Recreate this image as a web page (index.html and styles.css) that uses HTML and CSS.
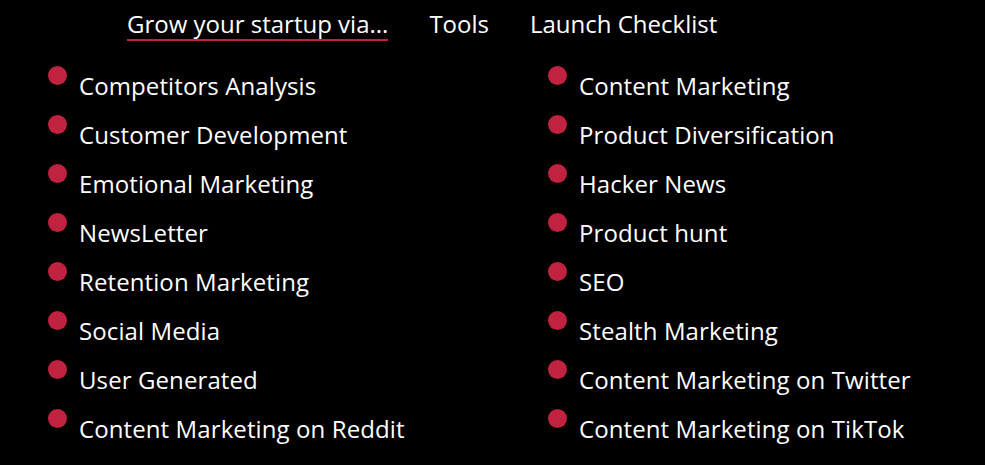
FILE: index.html
```html
<!DOCTYPE html>
<html>
<head>
<meta charset="utf-8">
<link rel="stylesheet" href="styles.css">
</head>
<body>
<nav class="nav">
  <a class="nav-link active">Grow your startup via...</a>
  <a class="nav-link">Tools</a>
  <a class="nav-link">Launch Checklist</a>
</nav>
<ul class="list">
  <li class="item"><span class="dot"></span><span class="label">Competitors Analysis</span></li>
  <li class="item"><span class="dot"></span><span class="label">Content Marketing</span></li>
  <li class="item"><span class="dot"></span><span class="label">Customer Development</span></li>
  <li class="item"><span class="dot"></span><span class="label">Product Diversification</span></li>
  <li class="item"><span class="dot"></span><span class="label">Emotional Marketing</span></li>
  <li class="item"><span class="dot"></span><span class="label">Hacker News</span></li>
  <li class="item"><span class="dot"></span><span class="label">NewsLetter</span></li>
  <li class="item"><span class="dot"></span><span class="label">Product hunt</span></li>
  <li class="item"><span class="dot"></span><span class="label">Retention Marketing</span></li>
  <li class="item"><span class="dot"></span><span class="label">SEO</span></li>
  <li class="item"><span class="dot"></span><span class="label">Social Media</span></li>
  <li class="item"><span class="dot"></span><span class="label">Stealth Marketing</span></li>
  <li class="item"><span class="dot"></span><span class="label">User Generated</span></li>
  <li class="item"><span class="dot"></span><span class="label">Content Marketing on Twitter</span></li>
  <li class="item"><span class="dot"></span><span class="label">Content Marketing on Reddit</span></li>
  <li class="item"><span class="dot"></span><span class="label">Content Marketing on TikTok</span></li>
</ul>
</body>
</html>
```
FILE: styles.css
```css
html, body {
  margin: 0;
  padding: 0;
  background: #000;
  color: #fff;
  font-family: "Open Sans", "Noto Sans", sans-serif;
}
.nav {
  display: flex;
  gap: 41px;
  padding: 9px 0 0 127px;
  height: 33px;
}
.nav-link {
  font-size: 24px;
  line-height: 30px;
  color: #fff;
  height: 30px;
}
.nav-link.active {
  border-bottom: 2px solid #c0223f;
}
.list {
  list-style: none;
  margin: 0;
  padding: 24px 0 0 48px;
  display: grid;
  grid-template-columns: 500px 400px;
  grid-auto-rows: 49px;
}
.item {
  display: flex;
  align-items: flex-start;
}
.dot {
  width: 19px;
  height: 19px;
  border-radius: 50%;
  background: #c0223f;
  flex: none;
}
.label {
  margin-left: 12px;
  margin-top: 5px;
  font-size: 24px;
  line-height: 30px;
  letter-spacing: 0.1px;
}
```
